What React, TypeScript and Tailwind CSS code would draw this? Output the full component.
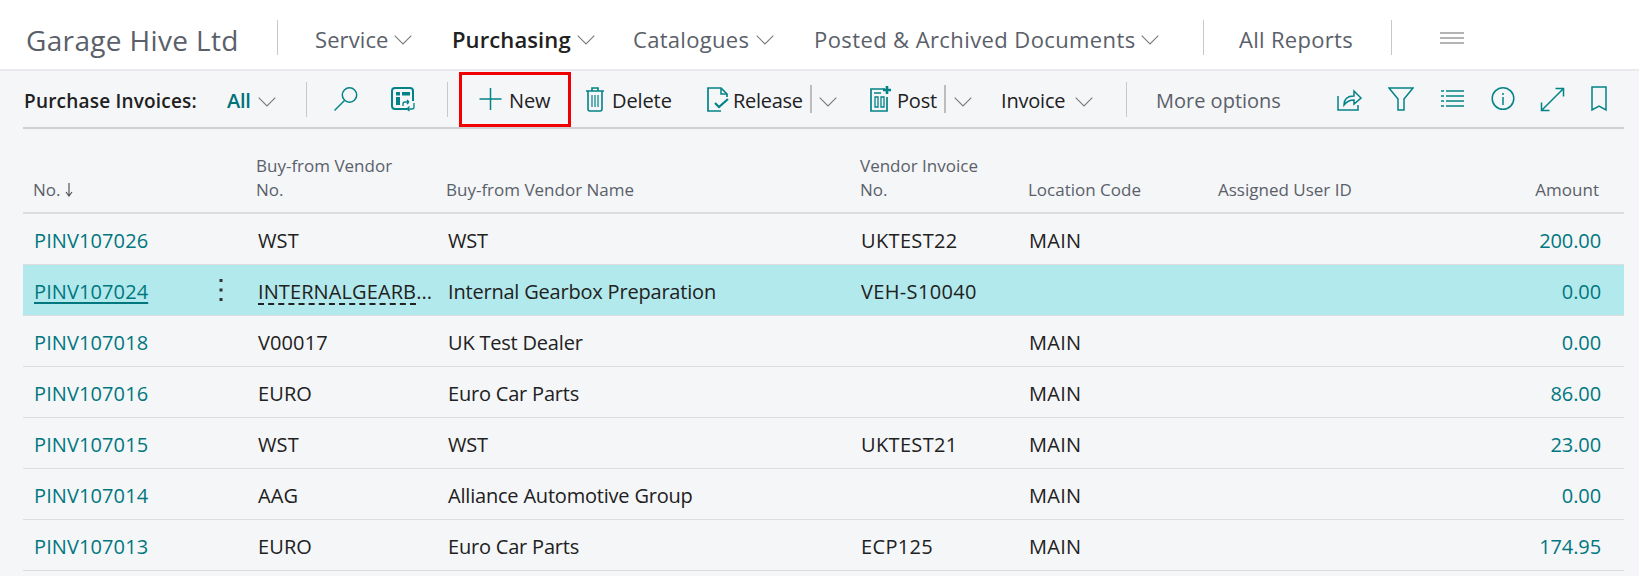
// Purchase Invoices list page
const teal = "#038387";

type Row = {
  no: string;
  vendorNo: string;
  vendorName: string;
  invoiceNo: string;
  location: string;
  amount: string;
  selected?: boolean;
};

const rows: Row[] = [
  { no: "PINV107026", vendorNo: "WST", vendorName: "WST", invoiceNo: "UKTEST22", location: "MAIN", amount: "200.00" },
  { no: "PINV107024", vendorNo: "INTERNALGEARB", vendorName: "Internal Gearbox Preparation", invoiceNo: "VEH-S10040", location: "", amount: "0.00", selected: true },
  { no: "PINV107018", vendorNo: "V00017", vendorName: "UK Test Dealer", invoiceNo: "", location: "MAIN", amount: "0.00" },
  { no: "PINV107016", vendorNo: "EURO", vendorName: "Euro Car Parts", invoiceNo: "", location: "MAIN", amount: "86.00" },
  { no: "PINV107015", vendorNo: "WST", vendorName: "WST", invoiceNo: "UKTEST21", location: "MAIN", amount: "23.00" },
  { no: "PINV107014", vendorNo: "AAG", vendorName: "Alliance Automotive Group", invoiceNo: "", location: "MAIN", amount: "0.00" },
  { no: "PINV107013", vendorNo: "EURO", vendorName: "Euro Car Parts", invoiceNo: "ECP125", location: "MAIN", amount: "174.95" },
];

const gridCols = "grid grid-cols-[223px_190px_413px_168px_190px_200px_1fr]";

function Chevron({ className = "", color = "#7a7a7a" }: { className?: string; color?: string }) {
  return (
    <svg width="18" height="10" viewBox="0 0 18 10" fill="none" className={`shrink-0 ${className}`}>
      <path d="M0.7 0.7 9 9 17.3 0.7" stroke={color} strokeWidth="1.1" />
    </svg>
  );
}

function Icon({ w, children, className = "" }: { w: number; children: React.ReactNode; className?: string }) {
  return (
    <svg width={w} height="26" viewBox={`0 0 ${w} 26`} fill="none" stroke={teal} strokeWidth="1.5" className={`shrink-0 ${className}`}>
      {children}
    </svg>
  );
}

function Divider({ className = "" }: { className?: string }) {
  return <div className={`w-px h-[35px] bg-[#c8c8c8] shrink-0 ${className}`} />;
}

function TopNav() {
  return (
    <div className="h-[71px] pt-[5px] bg-white border-b-2 border-[#e9eaee] flex items-center text-[#5a6069] text-[22px] shrink-0">
      <span className="ml-[26px] pt-[5px] text-[28px] tracking-[0.35px] w-[251px]">Garage Hive Ltd</span>
      <Divider />
      <span className="ml-[37px] pt-[5px] tracking-[0.1px] w-[79px]">Service</span>
      <Chevron className="mt-[6px]" />
      <span className="ml-[40px] pt-[5px] font-semibold text-[#212121] tracking-[0.1px] w-[125px]">Purchasing</span>
      <Chevron className="mt-[6px]" />
      <span className="ml-[38px] pt-[5px] tracking-[0.3px] w-[123px]">Catalogues</span>
      <Chevron className="mt-[6px]" />
      <span className="ml-[40px] pt-[5px] tracking-[0.4px] w-[327px]">Posted &amp; Archived Documents</span>
      <Chevron className="mt-[6px]" />
      <Divider className="ml-[44px]" />
      <span className="ml-[35px] pt-[5px] tracking-[0.3px] w-[152px]">All Reports</span>
      <Divider />
      <svg width="24" height="14" viewBox="0 0 24 14" className="ml-[48px] mt-[2px]" stroke="#6b6b6b" strokeWidth="1.2">
        <path d="M0 2h24M0 7h24M0 12h24" />
      </svg>
    </div>
  );
}

function Toolbar() {
  return (
    <div className="h-[58px] ml-[23px] mr-[15px] border-b-2 border-[#cfd0d6] flex items-center text-[20px] text-[#212121] shrink-0">
      <span className="ml-[1px] mt-[4px] w-[203px] font-semibold text-[19px] tracking-[0.2px]">Purchase Invoices:</span>
      <span className="mt-[4px] w-[31px] text-[#00727a] font-semibold tracking-[-0.3px]">All</span>
      <Chevron className="mt-[6px]" />
      <Divider className="ml-[30px]" />
      <Icon w={26} className="ml-[26px]">
        <circle cx="16.5" cy="9" r="7.2" />
        <path d="M11.5 14.5 1.5 24.5" />
      </Icon>
      <Icon w={26} className="ml-[31px]">
        <path d="M17 23H5a3 3 0 0 1-3-3V5a3 3 0 0 1 3-3h15a3 3 0 0 1 3 3v10" strokeWidth="2" />
        <rect x="6" y="6" width="4" height="3.5" fill={teal} stroke="none" />
        <rect x="12" y="6" width="8" height="3.5" fill={teal} stroke="none" />
        <rect x="6" y="11" width="4" height="8" fill={teal} stroke="none" />
        <path d="M24 17v4a2 2 0 0 1-2 2h-5M17 23l2.5-2.5M17 23l2.5 2M13 20v-2a2 2 0 0 1 2-2h4M19 16l-2-2M19 16l-2 2" strokeWidth="1.3" />
      </Icon>
      <Divider className="ml-[31px]" />
      <button className="ml-[11px] w-[112px] h-[55px] border-[3px] border-[#f00000] flex items-center pl-[17px] shrink-0">
        <Icon w={23}>
          <path d="M11.5 2v22M0.5 13h22" />
        </Icon>
        <span className="ml-[7px] mt-[4px] tracking-[-0.1px]">New</span>
      </button>
      <Icon w={20} className="ml-[14px]">
        <path d="M1 5h18M7 5V2h6v3M3 5v18a2 2 0 0 0 2 2h10a2 2 0 0 0 2-2V5" strokeWidth="1.6" />
        <path d="M7 9v12M10 9v12M13 9v12" strokeWidth="1.2" />
      </Icon>
      <span className="ml-[7px] mt-[4px] w-[94px] tracking-[-0.1px]">Delete</span>
      <Icon w={23}>
        <path d="M21 11V8l-6-6H2v23h13" strokeWidth="1.7" />
        <path d="M15 2v6h6" strokeWidth="1.5" />
        <path d="M9 17l4 4 9-8" strokeWidth="2.2" />
      </Icon>
      <span className="ml-[4px] mt-[4px] w-[77px] tracking-[-0.3px]">Release</span>
      <div className="w-[2px] h-[28px] bg-[#bdbdbd] shrink-0" />
      <Chevron className="ml-[7px] mt-[6px]" />
      <Icon w={21} className="ml-[33px]">
        <path d="M15 3H1v22h16V11" strokeWidth="1.7" />
        <path d="M5 11h3v10H5zM11 11h3v10h-3zM4 7h7" strokeWidth="1.3" />
        <path d="M17 0v8M13 4h8" strokeWidth="2.6" />
      </Icon>
      <span className="ml-[6px] mt-[4px] w-[47px] tracking-[-0.2px]">Post</span>
      <div className="w-[2px] h-[28px] bg-[#bdbdbd] shrink-0" />
      <Chevron className="ml-[8px] mt-[6px]" />
      <span className="ml-[29px] mt-[4px] w-[74px] tracking-[-0.2px]">Invoice</span>
      <Chevron className="mt-[6px]" />
      <Divider className="ml-[33px]" />
      <span className="ml-[29px] mt-[4px] w-[181px] text-[#5a6069] tracking-[0px]">More options</span>
      <Icon w={25}>
        <path d="M1 10v14h20v-5" />
        <path d="M7 19c0-6 4-9 10-9V5l7 7-7 6v-4c-4 0-7 1-10 5z" />
      </Icon>
      <Icon w={26} className="ml-[26px]">
        <path d="M1 2h24l-9 11v11h-6V13z" />
      </Icon>
      <Icon w={24} className="ml-[27px]">
        <path d="M0 5h3M5 5h18M0 10h3M5 10h18M0 15h3M5 15h18M0 20h3M5 20h18" />
      </Icon>
      <Icon w={24} className="ml-[26px]">
        <circle cx="12" cy="12.5" r="10.8" />
        <path d="M12 11v8" />
        <path d="M12 7v2" />
      </Icon>
      <Icon w={25} className="ml-[25px]">
        <path d="M1 25 23 3M15.5 2.5h8v8M1.5 16.5v8h8" />
      </Icon>
      <Icon w={18} className="ml-[25px]">
        <path d="M2 1h14v23l-7-4-7 4z" />
      </Icon>
    </div>
  );
}

function HeaderRow() {
  return (
    <div className={`${gridCols} h-[85px] ml-[23px] mr-[15px] border-b-2 border-[#dcdde1] text-[#5a6069] text-[17px] leading-[24px] items-end pb-[10px] shrink-0`}>
      <div className="pl-[10px] flex items-center">
        No.
        <svg width="8" height="16" viewBox="0 0 8 16" className="ml-[4px]" stroke="#555555" fill="none" strokeWidth="1.2">
          <path d="M4 1v13M1 10 4 14l3-4" />
        </svg>
      </div>
      <div className="pl-[10px]">
        <div>Buy-from Vendor</div>
        <div>No.</div>
      </div>
      <div className="pl-[10px]">Buy-from Vendor Name</div>
      <div className="pl-[11px]">
        <div>Vendor Invoice</div>
        <div>No.</div>
      </div>
      <div className="pl-[11px]">Location Code</div>
      <div className="pl-[11px]">Assigned User ID</div>
      <div className="text-right pr-[25px]">Amount</div>
    </div>
  );
}

function TableRow({ row }: { row: Row }) {
  return (
    <div
      className={`${gridCols} h-[51px] ml-[23px] mr-[15px] pt-[4px] border-b border-[#dcdde1] items-center text-[20px] tracking-[-0.1px] text-[#212121] shrink-0 ${
        row.selected ? "bg-[#b2e9ec]" : ""
      }`}
    >
      <div className="pl-[11px] flex items-center justify-between pr-[23px] tracking-[0.1px]">
        <span className={`text-[#00777f] ${row.selected ? "underline underline-offset-[3px] decoration-[2px]" : ""}`}>{row.no}</span>
        {row.selected && (
          <svg width="4" height="22" viewBox="0 0 4 22" fill="#333333" className="-mt-[4px]">
            <rect x="0.5" y="0" width="3" height="3" />
            <rect x="0.5" y="9.5" width="3" height="3" />
            <rect x="0.5" y="19" width="3" height="3" />
          </svg>
        )}
      </div>
      <div className="pl-[12px] whitespace-nowrap overflow-hidden tracking-[0.1px]">
        {row.selected ? (
          <>
            <span className="underline decoration-dashed underline-offset-[4px]">{row.vendorNo}</span>
            <span>...</span>
          </>
        ) : (
          row.vendorNo
        )}
      </div>
      <div className="pl-[12px] tracking-[-0.2px]">{row.vendorName}</div>
      <div className="pl-[12px] tracking-[0.35px]">{row.invoiceNo}</div>
      <div className="pl-[12px] tracking-[0.3px]">{row.location}</div>
      <div className="pl-[11px]" />
      <div className="text-right text-[#00777f] pr-[23px]">{row.amount}</div>
    </div>
  );
}

export default function App() {
  return (
    <div className="w-[1639px] h-[576px] overflow-hidden bg-[#f5f6f8] flex flex-col font-['Open_Sans',sans-serif]">
      <TopNav />
      <Toolbar />
      <HeaderRow />
      {rows.map((row) => (
        <TableRow key={row.no} row={row} />
      ))}
    </div>
  );
}
